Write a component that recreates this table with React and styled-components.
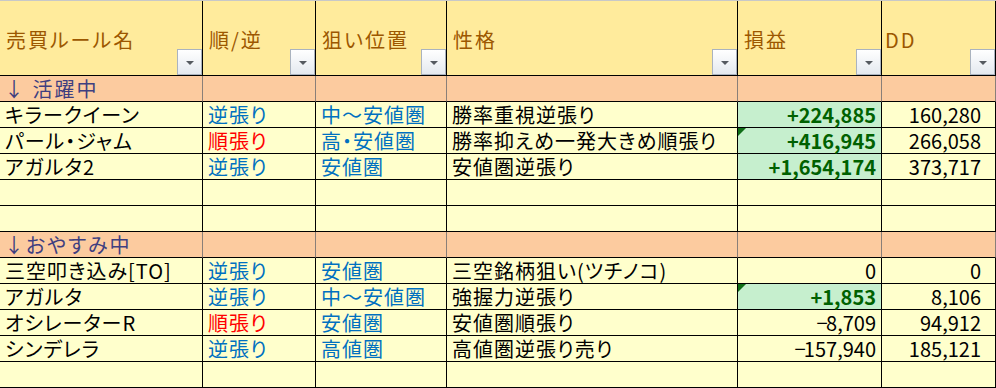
import React from "react";
import styled, { createGlobalStyle } from "styled-components";

const GlobalStyle = createGlobalStyle`
  html, body {
    margin: 0;
    padding: 0;
    background: #ffffff;
  }
  body {
    font-family: "Noto Sans CJK JP", "Noto Sans", sans-serif;
  }
`;

const BLUE = "#0070c0";
const RED = "#ff0000";

const headers = ["売買ルール名", "順/逆", "狙い位置", "性格", "損益", "DD"];

const active = [
  { name: "キラークイーン", dir: "逆張り", pos: "中～安値圏", kind: "勝率重視逆張り", pl: "+224,885", dd: "160,280", good: true },
  { name: "パール・ジャム", dir: "順張り", pos: "高・安値圏", kind: "勝率抑えめ一発大きめ順張り", pl: "+416,945", dd: "266,058", good: true, mark: true },
  { name: "アガルタ2", dir: "逆張り", pos: "安値圏", kind: "安値圏逆張り", pl: "+1,654,174", dd: "373,717", good: true },
  null,
  null,
];

const resting = [
  { name: "三空叩き込み[TO]", dir: "逆張り", pos: "安値圏", kind: "三空銘柄狙い(ツチノコ)", pl: "0", dd: "0" },
  { name: "アガルタ", dir: "逆張り", pos: "中～安値圏", kind: "強握力逆張り", pl: "+1,853", dd: "8,106", good: true, mark: true },
  { name: "オシレーターR", dir: "順張り", pos: "安値圏", kind: "安値圏順張り", pl: "-8,709", dd: "94,912" },
  { name: "シンデレラ", dir: "逆張り", pos: "高値圏", kind: "高値圏逆張り売り", pl: "-157,940", dd: "185,121" },
  null,
];

const Sheet = styled.div`
  display: grid;
  grid-template-columns: 203px 113px 131px 291px 144px 114px;
  width: 996px;
  border-top: 1px solid #c8c8c8;
  font-family: "Noto Sans CJK JP", sans-serif;
  font-size: 20px;
  line-height: 1;
  font-feature-settings: "palt";
`;

const HeaderCell = styled.div`
  position: relative;
  height: 75px;
  box-sizing: border-box;
  display: flex;
  align-items: center;
  padding: 3px 0 0 ${(p) => (p.$latin ? 3 : 6)}px;
  border-right: 1px solid #000;
  border-bottom: 1px solid #000;
  background: #ffeb9c;
  color: #9c5700;
  letter-spacing: 2px;
`;

const FilterButton = styled.span`
  position: absolute;
  right: 0;
  bottom: 0;
  width: 25px;
  height: 26px;
  box-sizing: border-box;
  border: 1px solid #aab3bf;
  background: linear-gradient(#ffffff, #e4e9ef);
  display: flex;
  align-items: center;
  justify-content: center;

  &::after {
    content: "";
    border-left: 4px solid transparent;
    border-right: 4px solid transparent;
    border-top: 4px solid #555a60;
    margin-top: 1px;
  }
`;

const GroupCell = styled.div`
  height: 26px;
  box-sizing: border-box;
  display: flex;
  align-items: center;
  padding-left: 4px;
  border-right: 1px solid #8a7f78;
  border-bottom: 1px solid #000;
  background: #fccb9f;
  color: #3f3f80;
  white-space: nowrap;
  letter-spacing: 2px;

  &:last-child {
    border-right-color: #000;
  }
`;

const Cell = styled.div`
  position: relative;
  height: 26px;
  box-sizing: border-box;
  display: flex;
  align-items: center;
  justify-content: ${(p) => (p.$num ? "flex-end" : "flex-start")};
  padding: 0 ${(p) => p.$pr || 5}px 0 5px;
  border-right: 1px solid #000;
  border-bottom: 1px solid #000;
  background: ${(p) => (p.$good ? "#c6efce" : "#ffffcc")};
  color: ${(p) => p.$color || "#000"};
  font-weight: ${(p) => (p.$good ? 700 : 400)};
  letter-spacing: ${(p) => (p.$num ? 0 : 1)}px;
  white-space: nowrap;

  ${(p) =>
    p.$mark &&
    `
    &::before {
      content: "";
      position: absolute;
      top: 0;
      left: 0;
      border-top: 8px solid #0f6e17;
      border-right: 8px solid transparent;
    }
  `}
`;

const Minus = styled.span`
  font-family: "Liberation Sans", sans-serif;
  letter-spacing: -2px;
`;

function Amount({ value }) {
  if (value.startsWith("-")) {
    return (
      <>
        <Minus>−</Minus>
        {value.slice(1)}
      </>
    );
  }
  return value;
}

function GroupRow({ label }) {
  return (
    <>
      <GroupCell>{label}</GroupCell>
      {[1, 2, 3, 4, 5].map((i) => (
        <GroupCell key={i} />
      ))}
    </>
  );
}

function RuleRow({ row }) {
  if (!row) {
    return (
      <>
        {[0, 1, 2, 3, 4, 5].map((i) => (
          <Cell key={i} />
        ))}
      </>
    );
  }
  return (
    <>
      <Cell>{row.name}</Cell>
      <Cell $color={row.dir === "順張り" ? RED : BLUE}>{row.dir}</Cell>
      <Cell $color={BLUE}>{row.pos}</Cell>
      <Cell>{row.kind}</Cell>
      <Cell $num $good={row.good} $mark={row.mark} $color={row.good ? "#006100" : "#000"}>
        <Amount value={row.pl} />
      </Cell>
      <Cell $num $pr={14}>
        {row.dd}
      </Cell>
    </>
  );
}

export default function App() {
  return (
    <>
      <GlobalStyle />
      <Sheet>
        {headers.map((h) => (
          <HeaderCell key={h} $latin={h === "DD"}>
            {h}
            <FilterButton />
          </HeaderCell>
        ))}
        <GroupRow label="↓ 活躍中" />
        {active.map((row, i) => (
          <RuleRow key={"a" + i} row={row} />
        ))}
        <GroupRow label="↓おやすみ中" />
        {resting.map((row, i) => (
          <RuleRow key={"r" + i} row={row} />
        ))}
      </Sheet>
    </>
  );
}
